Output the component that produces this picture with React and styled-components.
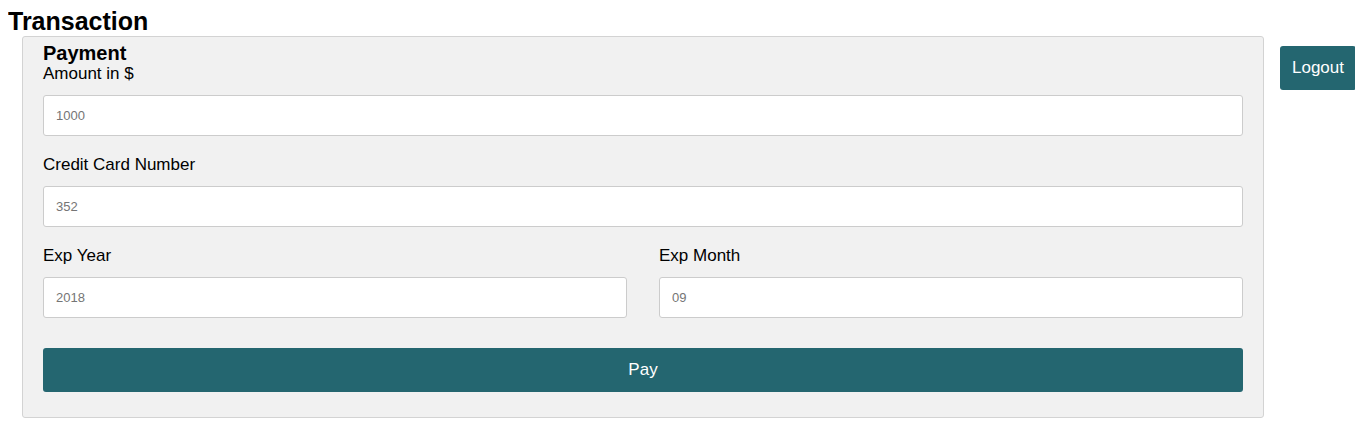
import React from "react";
import styled, { createGlobalStyle } from "styled-components";

const Global = createGlobalStyle`
  body {
    margin: 8px;
    background: #ffffff;
    font-family: "Liberation Sans", Arial, sans-serif;
    color: #000;
  }
  * { box-sizing: border-box; }
`;

const Title = styled.h1`
  margin: 0 0 2px;
  font-size: 25px;
  font-weight: bold;
  line-height: 26px;
`;

const Row = styled.div`
  display: flex;
  align-items: flex-start;
  gap: 16px;
  margin-right: -1px;
`;

const Card = styled.form`
  flex: 1;
  margin-left: 14px;
  background: #f1f1f1;
  border: 1px solid #d3d3d3;
  border-radius: 3px;
  padding: 5px 20px 25px;
`;

const Heading = styled.h3`
  margin: 0;
  font-size: 20px;
  font-weight: bold;
  line-height: 22px;
`;

const Label = styled.label`
  display: block;
  font-size: 17px;
  line-height: 20px;
  margin-bottom: 11px;
`;

const Field = styled.div`
  margin-bottom: ${(p) => (p.$last ? "30px" : "19px")};
`;

const Input = styled.input`
  display: block;
  width: 100%;
  height: 41px;
  padding: 0 12px;
  border: 1px solid #cccccc;
  border-radius: 3px;
  background: #fff;
  font-family: "Liberation Sans", Arial, sans-serif;
  font-size: 13px;
  color: #333;
  outline: none;
  &::placeholder { color: #757575; }
`;

const Split = styled.div`
  display: grid;
  grid-template-columns: 1fr 1fr;
  column-gap: 32px;
`;

const Button = styled.button`
  background: #246670;
  color: #fff;
  border: none;
  border-radius: 3px;
  font-family: "Liberation Sans", Arial, sans-serif;
  font-size: 17px;
  height: 44px;
  cursor: pointer;
  width: ${(p) => (p.$full ? "100%" : "76px")};
  padding: 0;
  margin-top: ${(p) => (p.$full ? "0" : "10px")};
`;

export default function App() {
  return (
    <>
      <Global />
      <Title>Transaction</Title>
      <Row>
        <Card onSubmit={(e) => e.preventDefault()}>
          <Heading>Payment</Heading>
          <Field>
            <Label>Amount in $</Label>
            <Input placeholder="1000" />
          </Field>
          <Field>
            <Label>Credit Card Number</Label>
            <Input placeholder="352" />
          </Field>
          <Split>
            <Field $last>
              <Label>Exp Year</Label>
              <Input placeholder="2018" />
            </Field>
            <Field $last>
              <Label>Exp Month</Label>
              <Input placeholder="09" />
            </Field>
          </Split>
          <Button $full type="submit">Pay</Button>
        </Card>
        <Button type="button">Logout</Button>
      </Row>
    </>
  );
}
